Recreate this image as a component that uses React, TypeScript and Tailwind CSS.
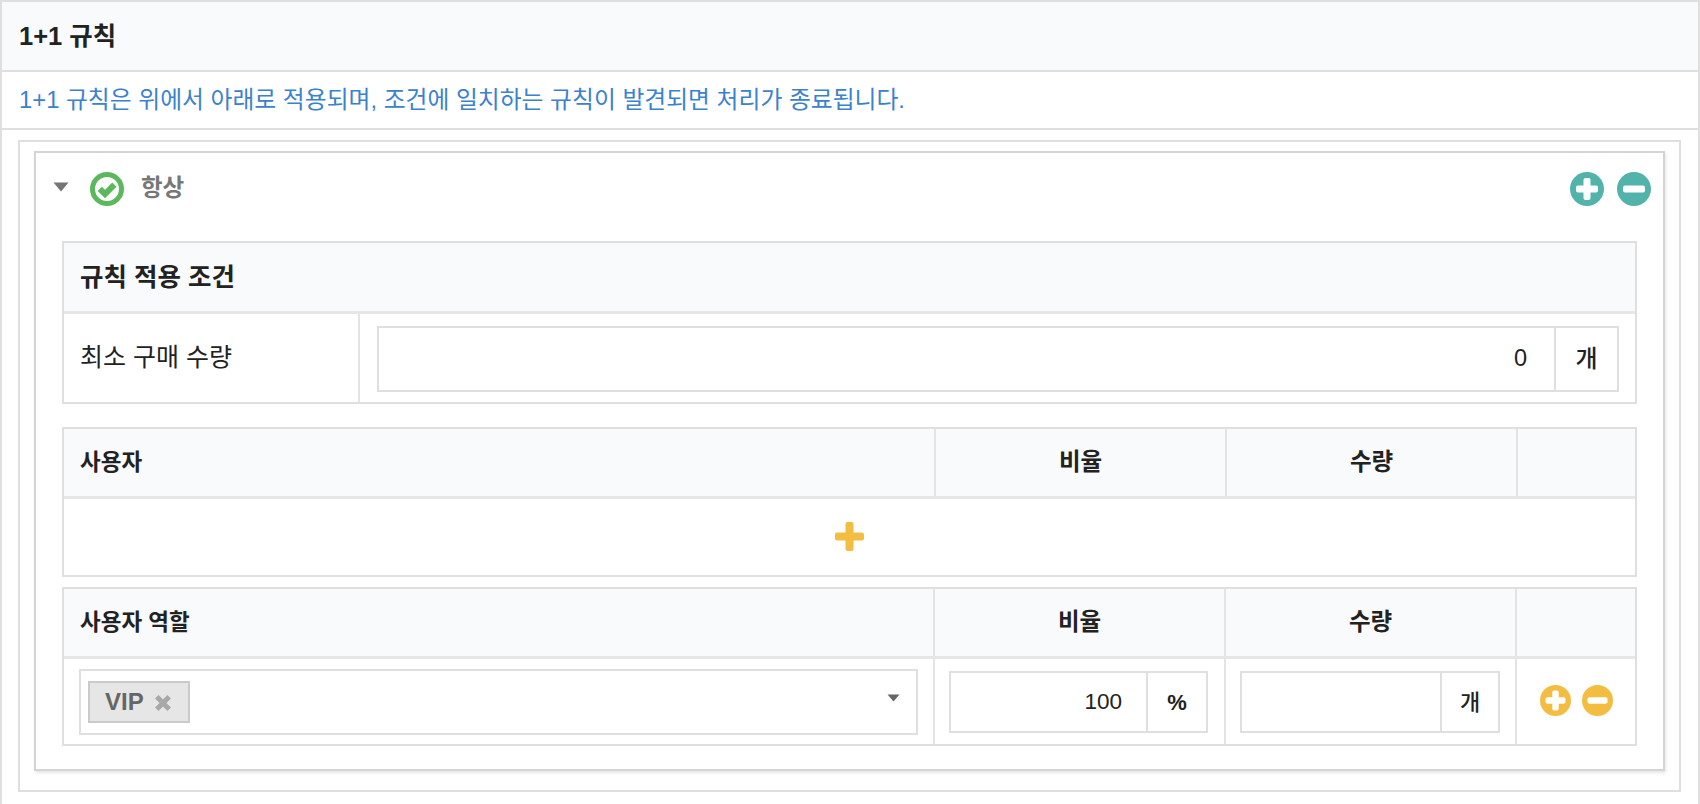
function CircleIcon({ kind, size, color }: { kind: 'plus' | 'minus'; size: number; color: string }) {
  return (
    <svg width={size} height={size} viewBox="0 0 34 34" className="shrink-0">
      <circle cx="17" cy="17" r="17" fill={color} />
      <rect x="6" y="13.5" width="22" height="7" rx="2" fill="#fff" />
      {kind === 'plus' && <rect x="13.5" y="6" width="7" height="22" rx="2" fill="#fff" />}
    </svg>
  );
}

function CheckIcon() {
  return (
    <svg width="34" height="34" viewBox="0 0 34 34" className="shrink-0">
      <circle cx="17" cy="17" r="14.5" fill="none" stroke="#5cb85c" strokeWidth="5" />
      <path d="M9.8 16.8l5.2 5.2 9.4-9.4" fill="none" stroke="#5cb85c" strokeWidth="6" />
    </svg>
  );
}

function Caret({ className }: { className: string }) {
  return (
    <svg viewBox="0 0 16 10" className={className}>
      <path d="M0.5 0.5h15L8 9.5z" fill="currentColor" />
    </svg>
  );
}

function Addon({ value, unit, inputW, unitW, unitFont }: { value: string; unit: string; inputW: string; unitW: string; unitFont: string }) {
  return (
    <div className="flex h-[62px]">
      <div className={`${inputW} border-2 border-r-0 border-[#dfdfdf] flex items-center justify-end pr-[24px] text-[22.5px] text-[#222]`}>
        {value}
      </div>
      <div className={`${unitW} ${unitFont} border-2 border-[#dfdfdf] flex items-center justify-center text-[22px] text-[#222]`}>
        {unit}
      </div>
    </div>
  );
}

function HeadRow({ title, first }: { title: string; first: string }) {
  return (
    <div className={`grid ${first} h-[70px] bg-[#f9fafc] border-b-[3px] border-[#e6e6e6] font-bold text-[23.5px] text-[#222]`}>
      <div className="border-r-2 border-[#e4e4e4] flex items-center pl-[16px] text-[22.5px]">{title}</div>
      <div className="border-r-2 border-[#e4e4e4] flex items-center justify-center">비율</div>
      <div className="border-r-2 border-[#e4e4e4] flex items-center justify-center">수량</div>
      <div />
    </div>
  );
}

export default function App() {
  return (
    <div
      className="h-screen overflow-hidden bg-white border-x-2 border-t-2 border-[#dfdfdf] text-[#222]"
      style={{ fontFamily: '"Liberation Sans", "Noto Sans CJK KR", sans-serif' }}
    >
      <div className="h-[70px] bg-[#f9fafc] border-b-2 border-[#dfdfdf] flex items-center pl-[17px] text-[25.5px] font-bold">
        1+1 규칙
      </div>
      <div className="h-[58px] border-b-2 border-[#dfdfdf] flex items-center pl-[17px] text-[23.8px] text-[#3b82cc]">
        1+1 규칙은 위에서 아래로 적용되며, 조건에 일치하는 규칙이 발견되면 처리가 종료됩니다.
      </div>

      <div className="pt-[10px] pl-[16px] pr-[17px]">
        <div className="border-2 border-[#dfdfdf] pt-[9px] pb-[19px] px-[14px]">
          <div className="border-2 border-[#d4d4d4] shadow-[1px_2px_3px_rgba(0,0,0,0.1)] px-[26px] pb-[23px]">
            {/* Rule header */}
            <div className="h-[88px] flex items-start -ml-[9px] -mr-[12px] pt-[19px]">
              <Caret className="w-[16px] h-[10px] mt-[10px] text-[#757575]" />
              <div className="ml-[21px]"><CheckIcon /></div>
              <span className="ml-[17px] text-[23.5px] font-bold text-[#777] leading-[32px]">항상</span>
              <div className="ml-auto flex gap-[13px] mr-[-2px]">
                <CircleIcon kind="plus" size={34} color="#52b3ab" />
                <CircleIcon kind="minus" size={34} color="#52b3ab" />
              </div>
            </div>

            {/* Conditions */}
            <div className="border-2 border-[#dfdfdf]">
              <div className="h-[71px] bg-[#f9fafc] border-b-[3px] border-[#e6e6e6] flex items-center pl-[16px] text-[25.5px] font-bold">
                규칙 적용 조건
              </div>
              <div className="flex h-[88px]">
                <div className="w-[296px] border-r-2 border-[#e4e4e4] flex items-center pl-[16px] text-[25px]">
                  최소 구매 수량
                </div>
                <div className="flex-1 pt-[12px] pl-[17px] pr-[16px]">
                  <div className="flex h-[66px]">
                    <div className="flex-1 border-2 border-r-0 border-[#dfdfdf] flex items-center justify-end pr-[27px] text-[23.5px]">
                      0
                    </div>
                    <div className="w-[65px] border-2 border-[#dfdfdf] flex items-center justify-center text-[24px] font-medium">
                      개
                    </div>
                  </div>
                </div>
              </div>
            </div>

            {/* Users */}
            <div className="border-2 border-[#dfdfdf] mt-[23px]">
              <HeadRow title="사용자" first="grid-cols-[872px_291px_291px_1fr]" />
              <div className="h-[76px] flex items-center justify-center pb-[2px]">
                <svg width="29" height="29" viewBox="0 0 29 29">
                  <rect x="0" y="10.5" width="29" height="8" rx="2" fill="#f3bd41" />
                  <rect x="10.5" y="0" width="8" height="29" rx="2" fill="#f3bd41" />
                </svg>
              </div>
            </div>

            {/* User roles */}
            <div className="border-2 border-[#dfdfdf] mt-[10px]">
              <HeadRow title="사용자 역할" first="grid-cols-[871px_291px_291px_1fr]" />
              <div className="grid grid-cols-[871px_291px_291px_1fr] h-[85px]">
                <div className="border-r-2 border-[#e4e4e4] pt-[10px] pl-[15px] pr-[15px]">
                  <div className="h-[66px] border-2 border-[#dfdfdf] flex items-center pl-[7px] pr-[16px]">
                    <div className="h-[42px] w-[102px] bg-[#e6e6e6] border-2 border-[#cacaca] flex items-center pl-[15px] text-[24px] font-bold text-[#666]">
                      VIP
                      <svg width="18" height="18" viewBox="0 0 16 16" className="ml-[10px] mt-[2px]">
                        <path d="M2.5 2.5l11 11M13.5 2.5l-11 11" stroke="#a8a8a8" strokeWidth="4.4" />
                      </svg>
                    </div>
                    <Caret className="ml-auto w-[13px] h-[8px] -mt-[8px] text-[#666]" />
                  </div>
                </div>
                <div className="border-r-2 border-[#e4e4e4] pt-[12px] pl-[14px]">
                  <Addon value="100" unit="%" inputW="w-[197px]" unitW="w-[62px]" unitFont="font-bold" />
                </div>
                <div className="border-r-2 border-[#e4e4e4] pt-[12px] pl-[14px]">
                  <Addon value="" unit="개" inputW="w-[200px]" unitW="w-[60px]" unitFont="font-medium" />
                </div>
                <div className="flex items-center justify-center gap-[11px] pb-[2px]">
                  <CircleIcon kind="plus" size={31} color="#f3bd41" />
                  <CircleIcon kind="minus" size={31} color="#f3bd41" />
                </div>
              </div>
            </div>
          </div>
        </div>
      </div>
    </div>
  );
}
